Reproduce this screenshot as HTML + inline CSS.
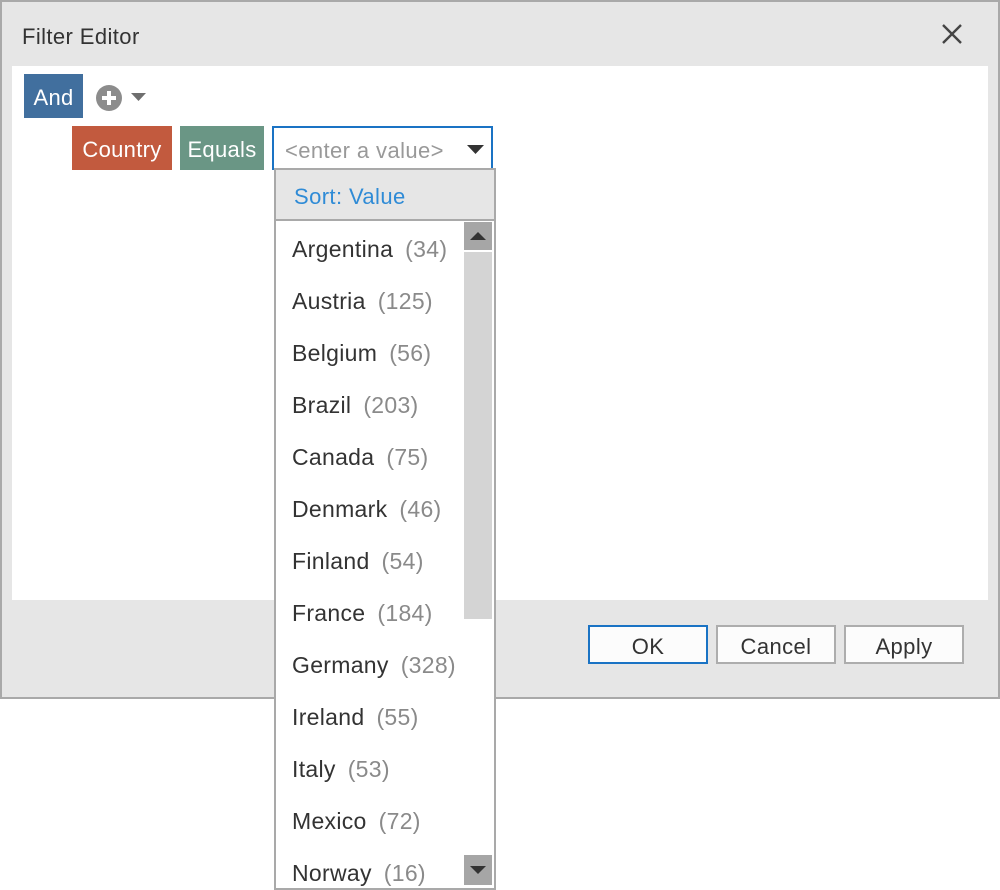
<!DOCTYPE html>
<html><head><meta charset="utf-8"><style>
*{margin:0;padding:0;box-sizing:border-box}
body{width:1000px;height:888px;background:#fff;font-family:"Segoe UI","Liberation Sans",sans-serif;position:relative;overflow:hidden}
.dlg{position:absolute;left:0;top:0;width:1000px;height:699px;background:#e6e6e6;border:2px solid #a9a9a9}
.title{position:absolute;left:22px;top:24px;font-size:22px;color:#333;letter-spacing:.4px}
.content{position:absolute;left:12px;top:66px;width:976px;height:534px;background:#fff}
.tag{position:absolute;color:#fff;font-size:22px;height:44px;line-height:48px;text-align:center;letter-spacing:.3px}
.btn{position:absolute;top:625px;height:39px;background:#fcfcfc;border:2px solid #adadad;font-size:22px;color:#333;text-align:center;line-height:40px;letter-spacing:.4px}
.pop{position:absolute;left:274px;top:168px;width:222px;height:722px;background:#fff;border:2px solid #a9a9a9}
.hdr{position:absolute;left:0;top:0;width:218px;height:51px;background:#e6e6e6;border-bottom:2px solid #a9a9a9;color:#2f8bd6;font-size:22px;line-height:54px;padding-left:18px;letter-spacing:.4px}
.item{position:absolute;left:16px;font-size:23px;color:#333;white-space:nowrap;letter-spacing:.3px}
.item span{color:#8a8a8a;margin-left:12px}
</style></head><body>
<div class="dlg"></div>
<div class="title">Filter Editor</div>
<svg style="position:absolute;left:940px;top:22px" width="24" height="24"><path d="M3 3L21 21M21 3L3 21" stroke="#444" stroke-width="2.4"/></svg>
<div class="content"></div>
<div class="tag" style="left:24px;top:74px;width:59px;background:#416f9e">And</div>
<svg style="position:absolute;left:95px;top:84px" width="56" height="28"><circle cx="14" cy="14" r="13" fill="#8c8c8c"/><path d="M14 7V21M7 14H21" stroke="#fff" stroke-width="4"/><path d="M36 9L51 9L43.5 17Z" fill="#6f6f6f"/></svg>
<div class="tag" style="left:72px;top:126px;width:100px;background:#c25a3e">Country</div>
<div class="tag" style="left:180px;top:126px;width:84px;background:#6a9685">Equals</div>
<div style="position:absolute;left:272px;top:126px;width:221px;height:44px;border:2px solid #1a73c4;background:#fff;font-size:22px;color:#999;line-height:46px;padding-left:11px;letter-spacing:.4px">&lt;enter a value&gt;</div>
<svg style="position:absolute;left:466px;top:144px" width="20" height="12"><path d="M1 1L18 1L9.5 10Z" fill="#333"/></svg>
<div class="btn" style="left:588px;width:120px;border-color:#1a73c4">OK</div>
<div class="btn" style="left:716px;width:120px">Cancel</div>
<div class="btn" style="left:844px;width:120px">Apply</div>
<div class="pop">
<div class="hdr">Sort: Value</div>
<div style="position:absolute;left:188px;top:52px;width:28px;height:28px;background:#a6a6a6"><svg width="28" height="28"><path d="M6 18L22 18L14 10Z" fill="#333"/></svg></div>
<div style="position:absolute;left:188px;top:82px;width:28px;height:367px;background:#d4d4d4"></div>
<div style="position:absolute;left:188px;top:685px;width:28px;height:30px;background:#a6a6a6"><svg width="28" height="30"><path d="M6 11L22 11L14 19Z" fill="#333"/></svg></div>
<div class="item" style="top:66px">Argentina<span>(34)</span></div>
<div class="item" style="top:118px">Austria<span>(125)</span></div>
<div class="item" style="top:170px">Belgium<span>(56)</span></div>
<div class="item" style="top:222px">Brazil<span>(203)</span></div>
<div class="item" style="top:274px">Canada<span>(75)</span></div>
<div class="item" style="top:326px">Denmark<span>(46)</span></div>
<div class="item" style="top:378px">Finland<span>(54)</span></div>
<div class="item" style="top:430px">France<span>(184)</span></div>
<div class="item" style="top:482px">Germany<span>(328)</span></div>
<div class="item" style="top:534px">Ireland<span>(55)</span></div>
<div class="item" style="top:586px">Italy<span>(53)</span></div>
<div class="item" style="top:638px">Mexico<span>(72)</span></div>
<div class="item" style="top:690px">Norway<span>(16)</span></div>
</div>
</body></html>
